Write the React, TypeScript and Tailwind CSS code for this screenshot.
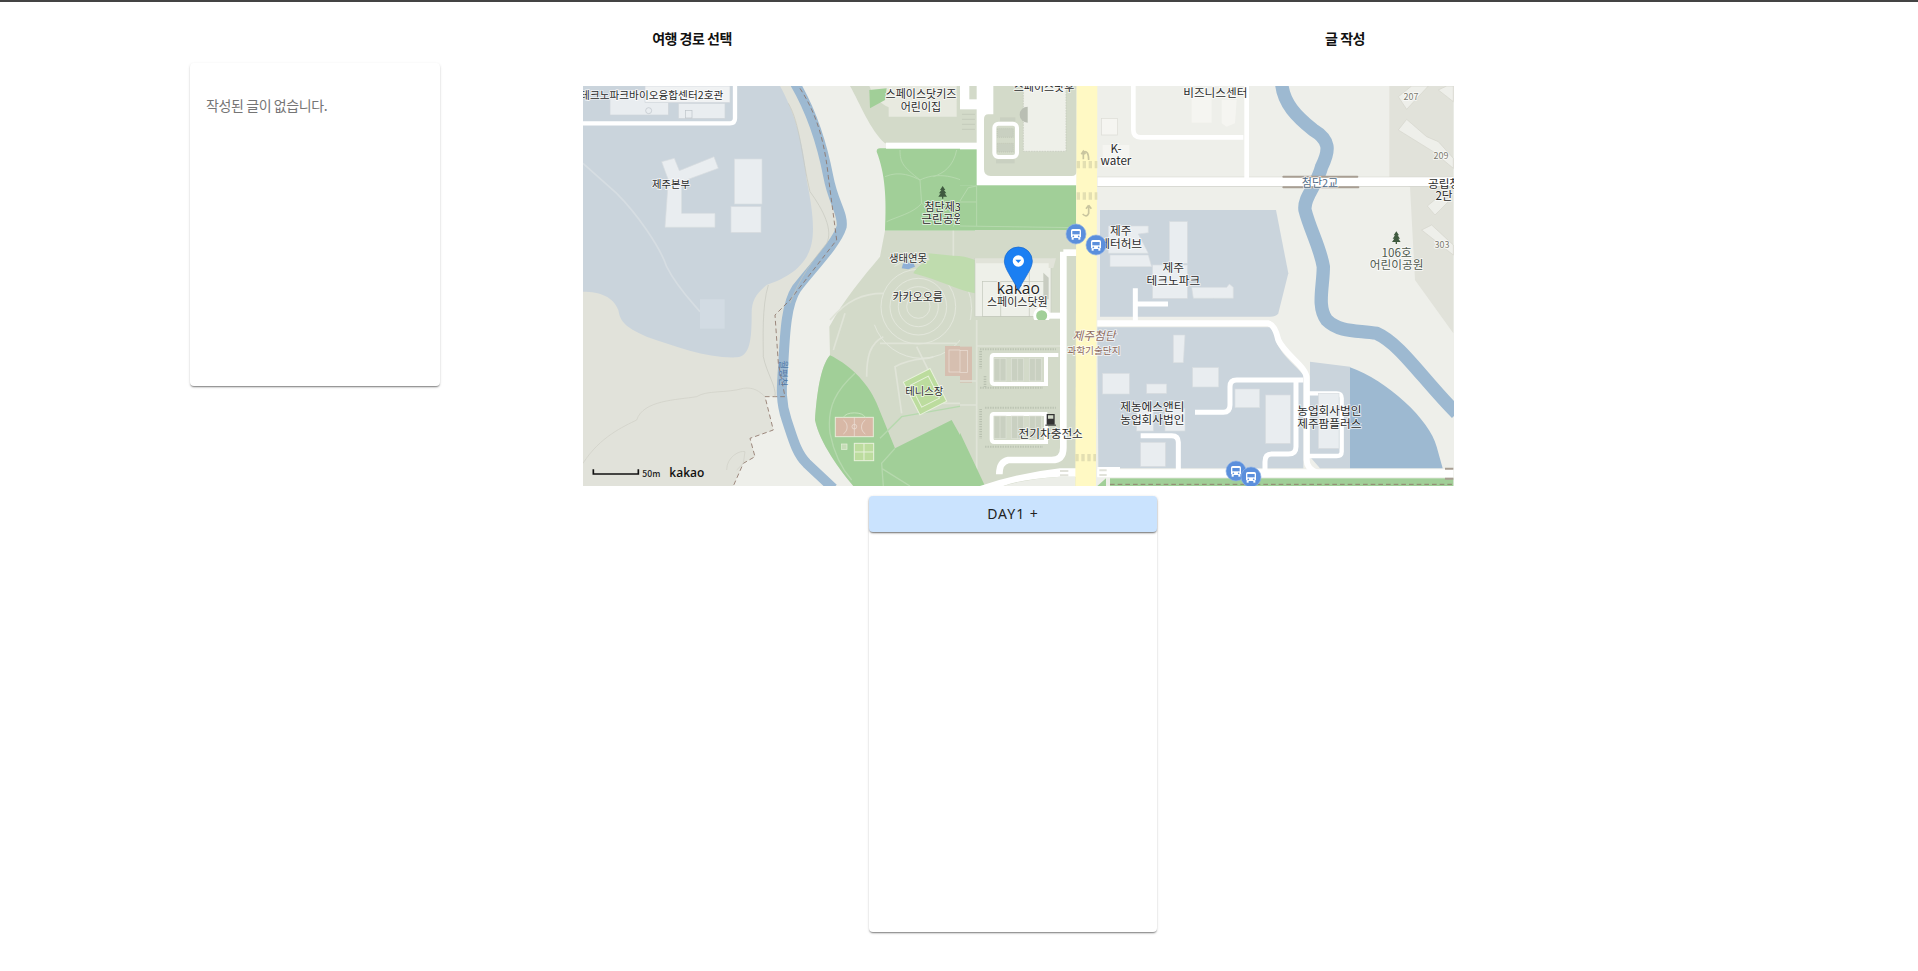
const WATER = "#9db9d1";
const BLOCK = "#cad4dc";
const BEIGE = "#e1e2da";
const PARK = "#d3dac9";
const GREEN = "#a1cf98";
const BUILDING = "#e9edf0";
const YELLOW = "#fff9c4";
const LOT = "#c9d0c1";
const FONT = "'Noto Sans CJK KR', 'Noto Sans', sans-serif";

type LabelProps = { x: number; y: number; lines: string[]; fill?: string; size?: number; italic?: boolean };

function Label({ x, y, lines, fill = "#2a2a2a", size = 33, italic }: LabelProps) {
  return (
    <text
      textAnchor="middle"
      fontFamily={FONT}
      fontSize={size}
      fontStyle={italic ? "italic" : undefined}
      fill={fill}
      stroke="#fff"
      strokeOpacity={0.75}
      strokeWidth={5}
      paintOrder="stroke"
    >
      {lines.map((line, i) => (
        <tspan key={i} x={x} y={y + i * 38}>
          {line}
        </tspan>
      ))}
    </text>
  );
}

function Bus({ x, y }: { x: number; y: number }) {
  return (
    <g transform={`translate(${x} ${y})`}>
      <circle r={30} fill="#5b8fdc" stroke="#8fb2e6" strokeWidth={2} />
      <rect x={-15} y={-15} width={30} height={27} rx={5} fill="#fff" />
      <rect x={-11} y={-9} width={22} height={10} fill="#5b8fdc" />
      <circle cx={-8} cy={7} r={2.5} fill="#5b8fdc" />
      <circle cx={8} cy={7} r={2.5} fill="#5b8fdc" />
      <rect x={-13} y={12} width={6} height={5} fill="#fff" />
      <rect x={7} y={12} width={6} height={5} fill="#fff" />
    </g>
  );
}

function Tree({ x, y }: { x: number; y: number }) {
  return <path transform={`translate(${x} ${y})`} d="M0 -18 L8 -6 L4 -6 L11 4 L6 4 L13 14 L2 14 L2 20 L-2 20 L-2 14 L-13 14 L-6 4 L-11 4 L-4 -6 L-8 -6 Z" fill="#3f5a3f" />;
}

function Lots({ y }: { y: number }) {
  return (
    <g fill={LOT} stroke="#dfe3d8" strokeWidth={2}>
      {[102, 155, 208].map((x) => (
        <g key={x}>
          <rect x={x} y={y} width={36} height={68} />
          <path d={`M${x + 18} ${y} L${x + 18} ${y + 68}`} />
        </g>
      ))}
    </g>
  );
}

function MapLeft() {
  return (
    <g transform="translate(-3 -6) scale(0.33333)">
      <path d="M9 18 L650 18 C680 70 720 160 745 290 C760 370 790 400 785 440 C770 490 700 560 650 625 C620 670 615 750 610 850 L600 950 L555 950 L580 1050 L510 1075 L525 1130 L490 1150 L460 1218 L9 1218 Z" fill={BEIGE} />
      <path d="M9 18 L600 18 C640 90 670 180 680 300 C700 400 710 480 680 530 C650 580 600 600 560 615 C530 640 515 660 515 700 C515 780 510 830 470 832 C380 835 290 800 200 770 C130 740 120 720 115 690 C100 650 60 635 9 635 Z" fill={BLOCK} />
      <path d="M9 250 L110 340 C170 400 240 500 260 560 C290 620 330 660 360 695" fill="none" stroke="#d6dde2" strokeWidth={5} />
      <rect x={360} y={658} width={74} height={88} fill="#d2dbe3" />
      <path d="M245 245 L283 235 L298 272 L402 230 L415 265 L305 305 L305 400 L405 400 L405 442 L255 442 L265 300 Z" fill={BUILDING} stroke="#d8dde0" strokeWidth={2} />
      <rect x={463} y={237} width={83} height={135} fill={BUILDING} stroke="#d8dde0" strokeWidth={2} />
      <rect x={453} y={380} width={90} height={77} fill={BUILDING} stroke="#d8dde0" strokeWidth={2} />

      <rect x={90} y={30} width={175} height={75} fill={BUILDING} stroke="#d0d6da" strokeWidth={2} />
      <rect x={295} y={70} width={140} height={45} fill={BUILDING} stroke="#d0d6da" strokeWidth={2} />
      <rect x={195} y={18} width={255} height={50} fill="#f0f2f3" stroke="#d0d6da" strokeWidth={2} />
      <circle cx={206} cy={92} r={9} fill="none" stroke="#bcc3c8" strokeWidth={2} />
      <rect x={316} y={92} width={20} height={22} fill="none" stroke="#bcc3c8" strokeWidth={2} />
      <path d="M9 130 L450 130 Q465 130 465 115 L465 18" fill="none" stroke="#fff" strokeWidth={13} />

      <path d="M645 10 C680 70 720 160 745 290 C760 370 790 400 785 440 C770 490 700 560 650 625 C620 670 615 750 610 850 C605 920 600 960 620 1020 C640 1080 650 1120 680 1150 L760 1225" fill="none" stroke={WATER} strokeWidth={30} />
      <path d="M660 25 C695 80 730 150 745 290 L770 480 L700 570 L630 660 L585 705 L595 850 L615 950 L555 950 L580 1050 L510 1075 L525 1130 L490 1150 L460 1218" fill="none" stroke="#8d7468" strokeWidth={2.5} strokeDasharray="14 9" />
      <path d="M690 335 C730 390 760 450 740 490 C700 540 660 590 630 670 M565 615 C545 680 550 780 550 830 C560 880 590 920 585 950 M625 70 C660 130 665 230 690 335" fill="none" stroke="#c6c7be" strokeWidth={2} />
      <path d="M9 1150 C60 1070 130 1040 170 1020 C190 960 290 960 350 950 C380 930 440 940 490 925 C520 920 540 935 555 950 M440 1170 C440 1130 480 1110 495 1115 L490 1150 L470 1170" fill="none" stroke="#cfcfc6" strokeWidth={2} />

      <path d="M810 18 L1190 18 L1190 190 L915 190 C870 150 840 70 810 18 Z" fill={PARK} />
      <path d="M868 18 L1130 18 L1130 110 L926 110 L926 82 C900 70 880 50 868 18 Z" fill="#e8eae0" />
      <path d="M868 30 L920 25 L915 60 L870 85 Z" fill={GREEN} />
      <path d="M900 205 L1190 205 L1190 452 L915 452 C920 350 915 280 890 215 Q890 205 900 205 Z" fill={GREEN} />
      <path d="M915 290 C960 270 1000 290 1020 300 C1060 280 1120 280 1180 320 M960 210 C960 250 970 260 1020 300 L1025 370 C1000 400 950 410 920 425 M1130 210 C1120 260 1090 280 1060 290 M1025 370 C1060 400 1120 440 1190 440 M1190 320 C1150 350 1140 370 1120 440" fill="none" stroke="#b6d9ae" strokeWidth={3} />
      <rect x={918} y={188} width={230} height={18} fill="#fff" />

      <path d="M915 452 L1320 452 L1320 1218 L820 1218 C780 1170 720 1090 705 1020 C710 950 720 860 750 826 L748 740 C790 660 850 590 900 530 Z" fill={PARK} />
      <path d="M750 826 C800 850 860 900 890 970 L945 1105 L1115 1020 L1225 1218 L820 1218 C780 1170 720 1090 705 1020 C710 950 720 860 750 826 Z" fill={GREEN} />
      <path d="M910 1218 L905 1150 L945 1105 M905 1165 L990 1218 M825 880 C770 930 740 980 750 1060 C760 1110 780 1160 815 1200 M900 1075 L965 1010 L1190 970" fill="none" stroke="#b6d9ae" strokeWidth={4} />
      <path d="M965 1000 L945 860 C1000 830 1040 840 1060 830 M750 720 C800 660 850 640 910 640 M1120 452 L1120 535 M1130 790 L900 790 M795 700 L760 810 M860 890 C860 830 870 790 910 770 M1010 800 L1050 880 M1090 970 L1190 970" fill="none" stroke="#e0e4d8" strokeWidth={5} />
      <g fill="none" stroke="#e3e7dc" strokeWidth={3}>
        <circle cx={1015} cy={680} r={35} />
        <circle cx={1015} cy={680} r={60} />
        <circle cx={1015} cy={680} r={85} />
        <circle cx={1015} cy={680} r={112} />
        <circle cx={1025} cy={685} r={150} strokeDasharray="420 200" />
      </g>
      <path d="M1000 580 C1020 535 1120 510 1185 540 L1185 640 C1130 630 1080 600 1000 580 Z M1045 520 L1150 530 L1100 550 L1050 550 Z" fill="#bfdcae" />
      <path d="M970 548 L1000 548 L1005 560 L985 568 L965 565 Z" fill="#8fb0d6" />
      <rect x={1095} y={798} width={80} height={90} fill="#d6bfb0" />
      <rect x={1107} y={810} width={56} height={66} fill="none" stroke="#ece2d9" strokeWidth={2} />
      <g transform="rotate(-27 1035 935)">
        <rect x={990} y={880} width={90} height={110} fill="#bcdc9e" stroke="#e8f1dc" strokeWidth={3} />
        <rect x={1005} y={898} width={60} height={74} fill="none" stroke="#e8f1dc" strokeWidth={3} />
      </g>
      <rect x={766} y={1012} width={114} height={58} fill="#d8b8a6" stroke="#e6ecd8" strokeWidth={3} />
      <path d="M823 1012 L823 1070 M790 1020 A25 25 0 0 1 790 1062 M856 1020 A25 25 0 0 0 856 1062" fill="none" stroke="#efe4dc" strokeWidth={2} />
      <circle cx={823} cy={1040} r={7} fill="none" stroke="#efe4dc" strokeWidth={2} />
      <path d="M790 1012 A35 20 0 0 1 856 1012" fill="none" stroke="#c5e2bb" strokeWidth={3} />
      <rect x={823} y={1090} width={58} height={52} fill="#bcdc9e" stroke="#e8f1dc" strokeWidth={3} />
      <path d="M852 1090 L852 1142 M823 1116 L881 1116" stroke="#e8f1dc" strokeWidth={3} />
      <rect x={785} y={1092} width={16} height={16} fill="#c6dcb8" stroke="#e8f1dc" strokeWidth={2} />

      <Label x={273} y={325} lines={["제주본부"]} size={31} />
      <Label x={215} y={58} lines={["테크노파크바이오융합센터2호관"]} size={32} />
      <Label x={1023} y={55} lines={["스페이스닷키즈", "어린이집"]} />
      <Label x={1088} y={392} lines={["첨단제3"]} />
      <Label x={1088} y={430} lines={["근린공원"]} size={35} />
      <Label x={984} y={545} lines={["생태연못"]} size={31} />
      <Label x={1013} y={662} lines={["카카오오름"]} />
      <Label x={1033} y={944} lines={["테니스장"]} size={31} />
      <text x={607} y={880} transform="rotate(90 607 880)" textAnchor="middle" dominantBaseline="middle" fontFamily={FONT} fontSize={28} fill="#4f78a6">
        월평천
      </text>
      <Tree x={1088} y={336} />

      <path d="M40 1168 L40 1182 L175 1182 L175 1168" fill="none" stroke="#111" strokeWidth={5} />
      <text x={187} y={1190} fontFamily={FONT} fontSize={26} fontWeight={500} fill="#222">50m</text>
      <text x={268} y={1191} fontFamily="'Open Sans', sans-serif" fontSize={36} fontWeight={600} fill="#111">kakao</text>
    </g>
  );
}

function MapRight() {
  return (
    <g transform="translate(437 -6) scale(0.33333)">
      <path d="M1108 18 L1300 18 L1300 760 L1185 600 L1170 320 L1108 295 Z" fill={BEIGE} />

      <path d="M240 390 L768 390 L805 580 L775 700 Q770 710 750 710 L240 710 Z" fill={BLOCK} />
      <path d="M232 742 L750 742 Q760 745 770 790 C790 830 830 860 850 885 L850 1165 L235 1165 Z" fill={BLOCK} />
      <path d="M870 845 L990 860 L990 1165 L900 1165 L870 1130 Z" fill={BLOCK} />
      <path d="M990 862 C1100 900 1230 1020 1250 1100 L1268 1165 L990 1165 Z" fill={WATER} />

      <path d="M785 10 C790 70 830 110 880 150 C930 180 930 210 905 260 C890 320 850 350 855 390 C870 450 900 500 910 560 C910 620 890 680 920 720 C960 760 1020 750 1070 760 C1140 790 1210 900 1310 1000" fill="none" stroke={WATER} strokeWidth={40} />

      <path d="M232 305 L1300 305" stroke="#d2d3cc" strokeWidth={30} />
      <path d="M232 305 L1300 305" stroke="#fff" strokeWidth={26} />
      <path d="M790 290 L1012 290 M790 322 L1015 322" stroke="#a89e93" strokeWidth={6} strokeLinecap="round" />
      <path d="M340 18 L340 150 Q340 172 362 172 L670 172 M680 18 L680 295" fill="none" stroke="#fff" strokeWidth={14} />
      <rect x={515} y={50} width={60} height={78} fill="#f5f5f1" />
      <path d="M605 60 L650 60 L645 130 L620 140 L605 130 Z" fill="#f5f5f1" />
      <rect x={245} y={115} width={48} height={50} fill="#f5f5f1" stroke="#dcdcd6" strokeWidth={2} />
      <rect x={248} y={195} width={80} height={65} fill="#f5f5f1" />

      <path d="M232 730 L745 730 Q765 735 775 780 C795 825 860 860 860 895 L860 1140 Q860 1165 890 1178" fill="none" stroke="#fff" strokeWidth={18} />
      <path d="M346 625 L346 722 M346 672 L444 672" stroke="#fff" strokeWidth={15} fill="none" />
      <path d="M525 997 L610 997 Q630 997 630 975 L630 920 Q630 900 650 900 L850 900 M828 905 L828 1100 Q828 1122 805 1122 L755 1122 Q735 1122 735 1145 L735 1178" fill="none" stroke="#fff" strokeWidth={15} />
      <path d="M865 940 L950 940 Q965 940 965 955 L965 1115 Q965 1128 950 1128 L865 1128" fill="none" stroke="#fff" strokeWidth={13} />
      <path d="M362 1067 L455 1067 Q475 1067 475 1087 L475 1178" fill="none" stroke="#fff" strokeWidth={15} />

      <g fill={BUILDING} stroke="#d8dde0" strokeWidth={2}>
        <path d="M265 438 L385 438 L385 458 L355 462 L385 520 L265 520 Z" />
        <path d="M270 525 L385 525 L395 560 L270 560 Z" />
        <rect x={448} y={425} width={54} height={125} />
        <rect x={398} y={555} width={104} height={100} />
        <path d="M515 622 L620 622 L628 612 L640 622 L640 655 L580 655 L520 655 Z" />
        <path d="M460 765 L495 765 L490 848 L460 848 Z" />
        <rect x={248} y={880} width={80} height={62} />
        <rect x={380} y={912} width={60} height={28} />
        <rect x={518} y={863} width={78} height={58} />
        <rect x={645} y={927} width={74} height={56} />
        <rect x={737} y={945} width={74} height={145} />
        <rect x={362} y={1087} width={74} height={72} />
        <rect x={895} y={940} width={62} height={165} />
        <rect x={350} y={985} width={50} height={68} />
        <rect x={435} y={985} width={60} height={68} />
      </g>

      <path d="M232 1180 L1300 1180" stroke="#fff" strokeWidth={24} />
      <rect x={270} y={1195} width={1030} height={23} fill={GREEN} />
      <path d="M270 1213 L1300 1213" stroke="#8d7468" strokeWidth={2.5} strokeDasharray="14 9" />
      <path d="M232 1218 L258 1195 L258 1218 Z" fill={GREEN} />
      <path d="M1275 1166 L1300 1166 M1275 1196 L1300 1196" stroke="#a89e93" strokeWidth={6} />

      <g fill="#eeefea" stroke="#d5d4cc" strokeWidth={2}>
        <path d="M1135 50 L1175 18 L1225 18 L1160 88 Z" />
        <path d="M1135 150 L1160 118 L1220 170 L1255 185 L1300 235 L1300 265 L1240 215 Z" />
        <path d="M1222 378 L1262 345 L1285 365 L1245 405 Z" />
        <path d="M1205 450 L1235 435 L1300 495 L1300 525 Z" />
        <path d="M1255 30 L1280 18 L1300 18 L1300 65 Z" />
      </g>
    </g>
  );
}

// central blocks: coordinates are 3x map pixels, x from 377
function MapCenter() {
  return (
    <g transform="translate(377 0) scale(0.33333)">
      {/* top block */}
      <rect x={0} y={0} width={350} height={298} fill="#fff" />
      <rect x={0} y={70} width={50} height={100} fill={PARK} />
      <path d="M6 85 L45 85 M6 100 L45 100 M6 115 L45 115 M6 130 L45 130" stroke="#bcc5b5" strokeWidth={2} />
      <rect x={28} y={0} width={22} height={40} fill={PARK} />
      <path d="M72 100 Q72 85 85 85 L100 85 L100 0 L350 0 L350 255 Q350 270 335 270 L92 270 Q72 270 72 250 Z" fill={PARK} />
      <rect x={190} y={0} width={128} height={196} fill="#eef0e9" stroke="#c2c7ba" strokeWidth={2} strokeDasharray="5 3" />
      <path d="M203 62 A24 24 0 0 0 203 110 Z" fill="#b9beb3" />
      <rect x={120} y={94} width={46} height={12} fill={LOT} />
      <rect x={108} y={220} width={56} height={12} fill={LOT} />
      <rect x={103} y={113} width={68} height={100} rx={12} fill="none" stroke="#fff" strokeWidth={12} />
      <rect x={112} y={128} width={48} height={26} fill={LOT} stroke="#a9b2a2" strokeWidth={1} strokeDasharray="3 3" />
      <rect x={112} y={172} width={48} height={26} fill={LOT} stroke="#a9b2a2" strokeWidth={1} strokeDasharray="3 3" />

      {/* green */}
      <rect x={0} y={190} width={50} height={108} fill={GREEN} />
      <rect x={0} y={298} width={348} height={134} fill={GREEN} />
      <path d="M0 345 L25 305 L50 300 L50 420 M0 348 L50 348 M0 420 L350 425" fill="none" stroke="#b6d9ae" strokeWidth={3} />

      {/* middle */}
      <rect x={45} y={432} width={305} height={270} fill={PARK} />
      <rect x={45} y={517} width={228} height={175} fill="#eef0e9" stroke="#c8cdc0" strokeWidth={2} />
      <path d="M45 517 L288 517 L280 546 L266 546 L266 532 L45 532 Z" fill="#e1e3d9" />
      <rect x={68} y={586} width={190} height={106} fill="none" stroke="#c2c7ba" strokeWidth={2} />
      <path d="M122 586 L122 692 M208 532 L208 692" stroke="#c2c7ba" strokeWidth={2} />
      <path d="M250 560 L266 575 L266 640 L250 640 Z" fill="#c8ccc1" />
      <rect x={265} y={680} width={45} height={18} fill="#fff" />
      <circle cx={245} cy={689} r={21} fill={GREEN} stroke="#fff" strokeWidth={9} />

      {/* bottom block */}
      <rect x={0} y={702} width={350} height={498} fill={PARK} />
      <rect x={0} y={782} width={36} height={108} fill="#d6bfb0" />
      <rect x={0} y={794} width={22} height={66} fill="none" stroke="#ece2d9" strokeWidth={2} />
      <path d="M50 702 L50 1150 M0 885 L50 885 M0 957 L50 957 M50 780 L300 780" stroke="#e0e4d8" strokeWidth={5} fill="none" />
      <path d="M0 1040 L75 1200 L0 1200 Z" fill={GREEN} />
      <path d="M60 790 L290 790 M60 905 L250 905 M75 965 L290 965 M75 1082 L250 1082" stroke="#b3bbab" strokeWidth={6} strokeDasharray="2 3" fill="none" />
      <path d="M62 795 L62 850 M75 870 L75 905 M62 970 L62 1060" stroke="#b3bbab" strokeWidth={8} strokeDasharray="2 3" fill="none" />
      <path d="M295 807 L101 807 Q95 807 95 815 L95 886 Q95 894 103 894 L258 894 L258 807" fill="none" stroke="#fff" strokeWidth={12} />
      <Lots y={817} />
      <rect x={270} y={817} width={26} height={68} fill={PARK} />
      <path d="M262 984 L101 984 Q95 984 95 992 L95 1060 Q95 1068 103 1068 L258 1068 L258 984" fill="none" stroke="#fff" strokeWidth={12} />
      <Lots y={990} />
      <path d="M310 497 L310 1085 Q310 1122 275 1122 L145 1122 Q118 1127 118 1165" fill="none" stroke="#fff" strokeWidth={20} />
      <path d="M60 1200 Q180 1160 300 1147 L350 1147 L350 1172 L300 1172 Q180 1180 130 1200 Z" fill="#fff" />
      <path d="M130 1200 Q200 1178 300 1172 L346 1172 L346 1200 Z" fill="#eceee8" />
      <path d="M300 1155 L325 1155 M300 1168 L325 1168" stroke="#e1e2da" strokeWidth={6} />

      {/* main road */}
      <path d="M310 500 L350 500" stroke="#fff" strokeWidth={20} />
      <path d="M350 0 L412 0 L408 1200 L346 1200 Z" fill={YELLOW} />
      <path d="M350 236 L412 236 M350 330 L412 330 M346 1115 L408 1115" stroke="#e3dfb2" strokeWidth={22} strokeDasharray="10 8" />
      <path d="M370 220 L370 198 M386 222 Q386 192 370 198 M364 205 L370 196 L376 205" fill="none" stroke="#c9c59f" strokeWidth={5} />
      <path d="M386 358 L386 382 Q380 396 368 384 M386 358 L378 368 M386 358 L394 368" fill="none" stroke="#c9c59f" strokeWidth={5} />
      <path d="M412 1150 L480 1150 M412 1165 L480 1165" stroke="#fff" strokeWidth={14} />
      <path d="M418 1153 L440 1153 M418 1167 L440 1167" stroke="#e1e2da" strokeWidth={6} />
    </g>
  );
}

function MapLabels() {
  return (
    <g transform="translate(437 -6) scale(0.33333)">
      <Label x={586} y={52} lines={["비즈니스센터"]} size={35} />
      <Label x={288} y={218} lines={["K-", "water"]} size={35} />
      <Label x={900} y={320} lines={["첨단2교"]} fill="#4f6a86" />
      <Label x={1272} y={323} lines={["공립청", "2단"]} size={35} />
      <Label x={1173} y={60} lines={["207"]} fill="#7d7a70" size={27} />
      <Label x={1263} y={237} lines={["209"]} fill="#7d7a70" size={27} />
      <Label x={1266} y={503} lines={["303"]} fill="#7d7a70" size={27} />
      <Label x={1130} y={530} lines={["106호", "어린이공원"]} fill="#4f5a4f" size={35} />
      <Label x={302} y={466} lines={["제주", "테터허브"]} size={35} />
      <Label x={460} y={577} lines={["제주", "테크노파크"]} size={35} />
      <Label x={222} y={780} lines={["제주첨단"]} fill="#8d6a5e" size={35} italic />
      <Label x={222} y={823} lines={["과학기술단지"]} fill="#8d6a5e" size={29} />
      <Label x={397} y={993} lines={["제농에스앤티", "농업회사법인"]} size={35} />
      <Label x={928} y={1005} lines={["농업회사법인", "제주팜플러스"]} size={35} />
      <Label x={92} y={1073} lines={["전기차충전소"]} size={35} />
      <Label x={72} y={32} lines={["스페이스닷후"]} />
      <Tree x={1129} y={472} />
      <path d="M80 1002 L104 1002 L104 1034 L80 1034 Z M84 1006 L100 1006 L100 1016 L84 1016 Z" fill="#333" fillRule="evenodd" />
      <rect x={76} y={1034} width={32} height={3} fill="#333" />

      <Bus x={168} y={462} />
      <Bus x={228} y={495} />
      <Bus x={648} y={1173} />
      <Bus x={693} y={1191} />

      <text x={-5} y={643} textAnchor="middle" fontFamily="'Open Sans', sans-serif" fontSize={47} fill="#222" stroke="#fff" strokeOpacity={0.75} strokeWidth={5} paintOrder="stroke">
        kakao
      </text>
      <Label x={-8} y={679} lines={["스페이스닷원"]} />
      <g transform="translate(0 6)">
        <path d="M-5 625 C-25 585 -47 560 -47 537 A42 42 0 0 1 37 537 C37 560 15 585 -5 625 Z" fill="#1b7ff2" stroke="#1566cc" strokeWidth={2} />
        <circle cx={-5} cy={537} r={17} fill="#fff" />
        <path d="M-14 533 L4 533 L-5 543 Z" fill="#1b7ff2" />
      </g>
    </g>
  );
}

export default function App() {
  return (
    <div className="min-h-[971px] border-t-2 border-[#444] bg-white font-['Noto_Sans_CJK_KR','Noto_Sans',sans-serif]">
      <div className="flex items-start pl-[190px]">
        <div className="mt-[61px] h-[323px] w-[250px] rounded bg-white px-4 pt-[31px] shadow-[0_2px_2px_-1px_rgba(0,0,0,0.35),0_1px_1px_0_rgba(0,0,0,0.14),0_1px_3px_0_rgba(0,0,0,0.12)]">
          <p className="text-sm leading-[22px] tracking-[-0.4px] text-[#757575]">작성된 글이 없습니다.</p>
        </div>

        <div className="ml-[143px] flex w-[871px] flex-col">
          <div className="flex h-[84px] justify-between">
            <button className="h-[72px] w-[218px] text-sm font-bold tracking-[-0.5px] text-[#111]">여행 경로 선택</button>
            <button className="h-[72px] w-[218px] text-sm font-bold tracking-[-0.5px] text-[#111]">글 작성</button>
          </div>
          <svg className="block h-[400px] w-[871px]" viewBox="0 0 871 400" role="img">
            <rect width="871" height="400" fill="#eeefea" />
            <MapLeft />
            <MapRight />
            <MapCenter />
            <MapLabels />
          </svg>
          <div className="ml-[286px] mt-[10px] h-[436px] w-[288px] rounded bg-white shadow-[0_2px_2px_-1px_rgba(0,0,0,0.35),0_1px_1px_0_rgba(0,0,0,0.14),0_1px_3px_0_rgba(0,0,0,0.12)]">
            <div className="flex h-9 items-center justify-center rounded bg-[#cae3fe] font-['Noto_Sans',sans-serif] text-sm font-normal tracking-[1px] text-[#222] shadow-[0_2px_2px_-1px_rgba(0,0,0,0.4),0_1px_1px_0_rgba(0,0,0,0.14),0_1px_3px_0_rgba(0,0,0,0.12)]">
              DAY1 +
            </div>
          </div>
        </div>
      </div>
    </div>
  );
}
